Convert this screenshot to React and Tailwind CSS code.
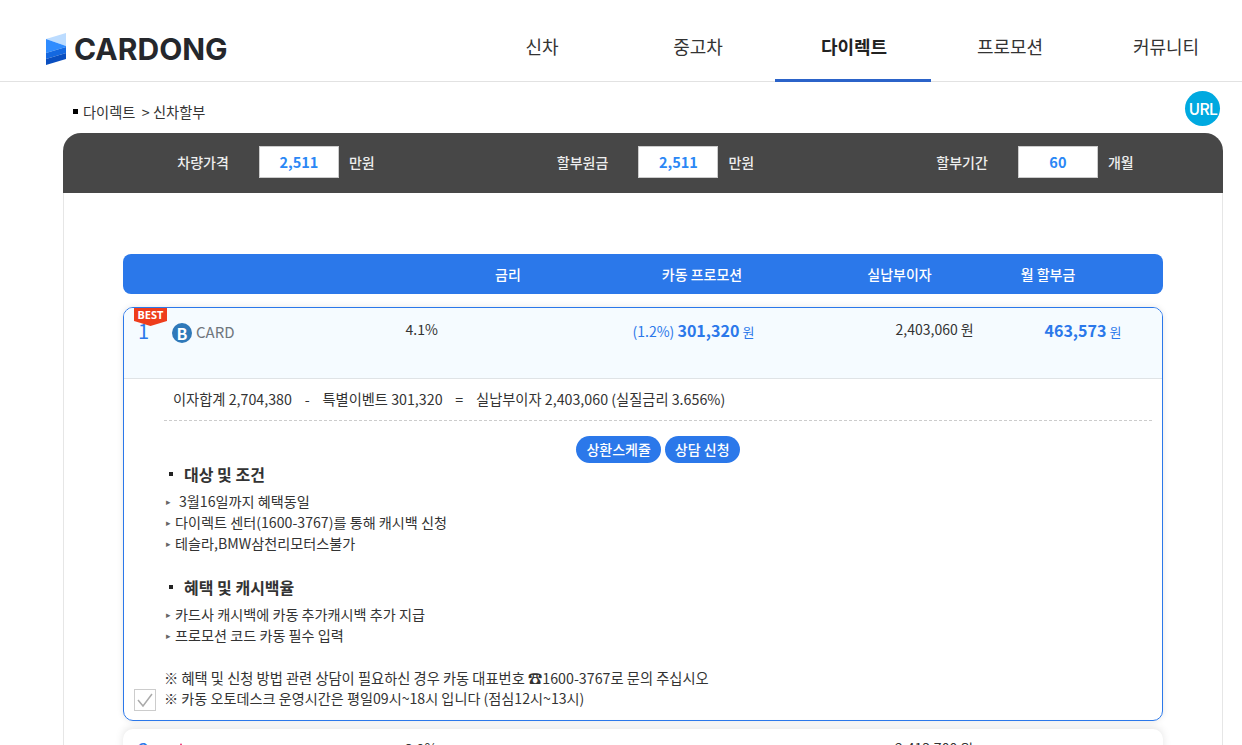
const FONT = "font-['Noto_Sans_CJK_KR','Noto_Sans',sans-serif]";

const Logo = () => (
    <div className="flex items-center">
        <svg width="20" height="32" viewBox="0 0 20 32" className="mr-2">
            <polygon points="0,6 20,0 20,13" fill="#bcdcff" />
            <polygon points="0,6 20,13 20,14 0,20" fill="#2f8cff" />
            <polygon points="0,20 20,14 20,20 0,26" fill="#1468e0" />
            <polygon points="0,26 20,20 20,26 0,32" fill="#0a4fc0" />
        </svg>
        <span className="font-['Inter',sans-serif] text-[30px] font-bold text-[#25272c] leading-none">CARDONG</span>
    </div>
);

const NavItem = ({ label, active }) => (
    <div className={`w-[156px] h-[82px] flex items-center justify-center text-[18px] pt-[14px] pl-[2px] border-b-[3px] ${active ? "border-[#2b63c9] font-bold text-[#222]" : "border-transparent text-[#333]"}`}>
        {label}
    </div>
);

const Field = ({ label, value, unit }) => (
    <div className="flex items-center w-[379.5px] shrink-0 text-[14px] font-medium text-[#eee]">
        <span className="w-[66px] text-right">{label}</span>
        <span className="ml-[30px] w-[80px] h-[32px] bg-white border border-[#ccc] flex items-center justify-center text-[14.5px] font-bold text-[#2b87f5]">{value}</span>
        <span className="ml-[10px]">{unit}</span>
    </div>
);

const Bullet = ({ children }) => (
    <div className="flex items-center h-[21px] text-[14.15px]">
        <span className="text-[9px] text-[#666] w-[9px] ml-[2px] leading-none">▸</span>
        {children}
    </div>
);

const SectionTitle = ({ children }) => (
    <div className="flex items-center pl-[5px] text-[16px] font-bold text-[#333] h-[24px]">
        <span className="w-[4px] h-[4px] bg-[#222] mr-[11px]" />
        {children}
    </div>
);

export default function App() {
    return (
        <div className={`${FONT} h-[745px] overflow-hidden bg-white text-[14.25px] text-[#333]`}>
            <header className="h-[82px] border-b border-[#e2e2e2] flex justify-between pl-[46px]">
                <div className="pt-[33px] h-fit"><Logo /></div>
                <nav className="flex -mr-[1px]">
                    <NavItem label="신차" />
                    <NavItem label="중고차" />
                    <NavItem label="다이렉트" active />
                    <NavItem label="프로모션" />
                    <NavItem label="커뮤니티" />
                </nav>
            </header>

            <div className="ml-[63px] w-[1160px]">
                <div className="h-[51px] pt-[8px] flex items-center justify-between pl-[10px] pr-[3px]">
                    <div className="flex items-center">
                        <span className="w-[5px] h-[5px] bg-black mr-[5px]" />
                        다이렉트 &nbsp;&gt; 신차할부
                    </div>
                    <div className="w-[35px] h-[35px] rounded-full bg-[#00a9e0] text-white flex items-center justify-center text-[16px] font-medium tracking-[-1px] -mt-[7px]">URL</div>
                </div>

                <div className="h-[60px] pb-[2px] bg-[#474747] rounded-t-[18px] flex items-center pl-[99.9px]">
                    <Field label="차량가격" value="2,511" unit="만원" />
                    <Field label="할부원금" value="2,511" unit="만원" />
                    <Field label="할부기간" value="60" unit="개월" />
                </div>

                <div className="border-x border-[#e6e6e6] px-[59px] pt-[61px] h-[600px]">
                    <div className="h-[40px] bg-[#2b78ea] rounded-[8px] text-white font-medium text-[14px]">
                        <div className="grid grid-cols-[335px_100px_288px_107px_190px] h-full items-center text-center whitespace-nowrap">
                            <span />
                            <span>금리</span>
                            <span>카동 프로모션</span>
                            <span>실납부이자</span>
                            <span>월 할부금</span>
                        </div>
                    </div>

                    <div className="relative mt-[13px] h-[414px] border border-[#2b78ea] rounded-[10px] shadow-[0_0_6px_rgba(0,0,0,0.1)] overflow-hidden">
                        <svg width="33" height="19" viewBox="0 0 33 19" className="absolute left-[10px] top-0">
                            <polygon points="0,0 33,0 33,13 16.5,18 0,13" fill="#ee3d1c" />
                            <text x="16.5" y="11" textAnchor="middle" fontSize="11" fontWeight="700" fill="#fff" fontFamily="Noto Sans">BEST</text>
                        </svg>

                        <div className="h-[71px] bg-[#f5fbff] border-b border-[#dfe3e6] flex items-start pt-[10px]">
                            <span className="w-[48px] pl-[14px] text-[20px] text-[#2b78ea] leading-[26px]">1</span>
                            <span className="w-[20px] h-[20px] rounded-full bg-[#2f79b9] text-white text-[16px] font-bold flex items-center justify-center mt-[5px]">B</span>
                            <span className="ml-[4px] text-[15px] text-[#6f767d] leading-[28px]">CARD</span>
                            <span className="w-[171px]" />
                            <span className="w-[33px] leading-[22px] text-[14px]">4.1%</span>
                            <span className="w-[194px]" />
                            <span className="w-[122px] leading-[24px] whitespace-nowrap text-[#2b78ea] text-[14px]">(1.2%) <b className="text-[16px]">301,320</b> <span className="text-[13px]">원</span></span>
                            <span className="w-[141px]" />
                            <span className="w-[77px] leading-[22px] whitespace-nowrap text-[14px]">2,403,060 원</span>
                            <span className="w-[72px]" />
                            <span className="leading-[24px] whitespace-nowrap"><b className="text-[16px] text-[#2b78ea]">463,573</b> <span className="text-[13px] text-[#2b78ea]">원</span></span>
                        </div>

                        <div className="pl-[40px] pr-[10px]">
                            <div className="h-[42px] pb-[2px] border-b border-dashed border-[#ccc] flex items-center pl-[9px] whitespace-pre">
                                이자합계 2,704,380{"    -    "}특별이벤트 301,320{"    =    "}실납부이자 2,403,060 (실질금리 3.656%)
                            </div>
                            <div className="flex justify-center gap-[4px] mt-[15px] text-[14px]">
                                <button className="h-[27px] px-[10px] rounded-full bg-[#2b78ea] text-white font-medium">상환스케쥴</button>
                                <button className="h-[27px] px-[10px] rounded-full bg-[#2b78ea] text-white font-medium">상담 신청</button>
                            </div>
                            <div className="-mt-[1px]"><SectionTitle>대상 및 조건</SectionTitle></div>
                            <div className="mt-[5px]">
                                <Bullet><span className="ml-[4px]">3월16일까지 혜택동일</span></Bullet>
                                <Bullet>다이렉트 센터(1600-3767)를 통해 캐시백 신청</Bullet>
                                <Bullet>테슬라,BMW삼천리모터스불가</Bullet>
                            </div>
                            <div className="mt-[21px]"><SectionTitle>혜택 및 캐시백율</SectionTitle></div>
                            <div className="mt-[5px]">
                                <Bullet>카드사 캐시백에 카동 추가캐시백 추가 지급</Bullet>
                                <Bullet>프로모션 코드 카동 필수 입력</Bullet>
                            </div>
                            <div className="mt-[21px] leading-[21px]">
                                <div>※ 혜택 및 신청 방법 관련 상담이 필요하신 경우 카동 대표번호 ☎1600-3767로 문의 주십시오</div>
                                <div className="text-[14.15px]">※ 카동 오토데스크 운영시간은 평일09시~18시 입니다 (점심12시~13시)</div>
                            </div>
                        </div>

                        <div className="absolute left-[10px] bottom-[9px] w-[22px] h-[22px] border border-[#ccc] flex items-center justify-center">
                            <svg width="18" height="16" viewBox="0 0 18 16" fill="none" stroke="#aaa" strokeWidth="1.5"><path d="M2 8l5 6 9-12" /></svg>
                        </div>
                    </div>

                    <div className="mt-[8px] h-[60px] rounded-[10px] shadow-[0_-2px_8px_rgba(0,0,0,0.1)] bg-white flex items-start pt-[8px]">
                        <span className="w-[48px] pl-[15px] text-[20px] text-[#2b78ea] leading-[26px]">2</span>
                        <svg width="20" height="20" viewBox="0 0 20 20" className="mt-[6px]"><polygon points="10,0 14,8 6,8" fill="#e6125d" /></svg>
                        <span className="w-[214px]" />
                        <span className="w-[33px] leading-[22px] text-[14px]">3.9%</span>
                        <span className="w-[457px]" />
                        <span className="leading-[22px] whitespace-nowrap text-[14px]">2,413,700 원</span>
                    </div>
                </div>
            </div>
        </div>
    );
}
